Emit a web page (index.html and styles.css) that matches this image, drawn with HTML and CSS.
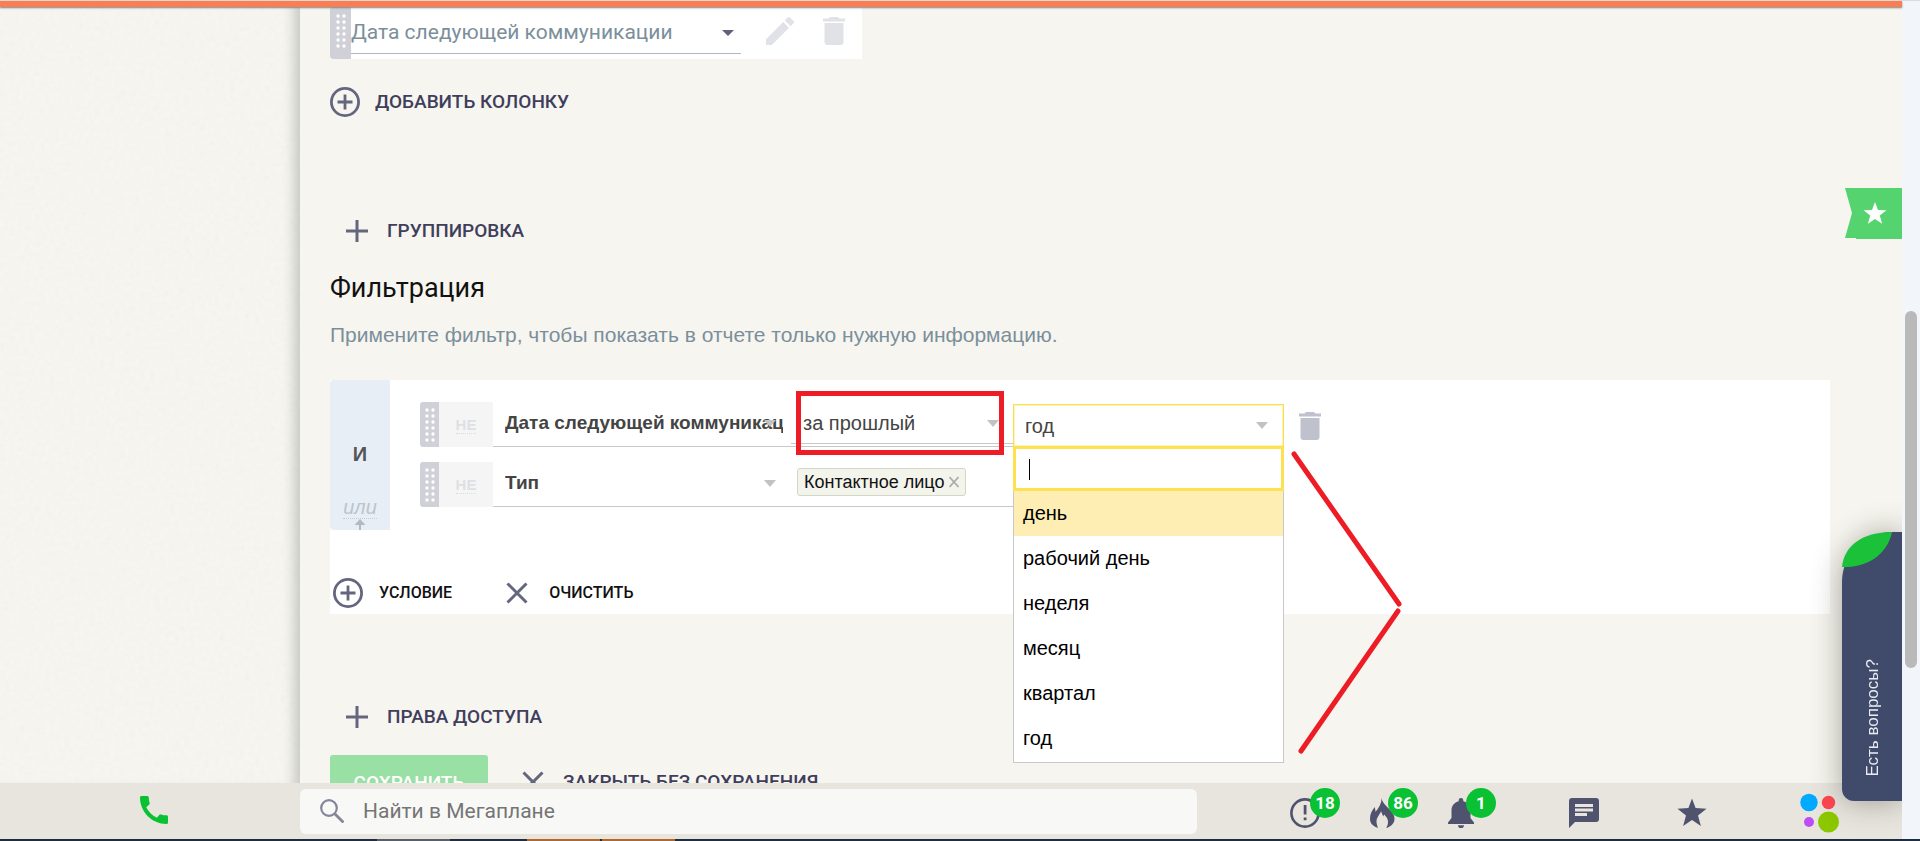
FILE: index.html
```html
<!DOCTYPE html>
<html lang="ru">
<head>
<meta charset="utf-8">
<title>Мегаплан — отчет</title>
<link rel="stylesheet" href="styles.css">
</head>
<body>
<svg class="defs" aria-hidden="true">
  <symbol id="i-dots" viewBox="0 0 12 36"><g fill="#fff"><circle cx="2" cy="3" r="1.7"/><circle cx="8" cy="3" r="1.7"/><circle cx="2" cy="9" r="1.7"/><circle cx="8" cy="9" r="1.7"/><circle cx="2" cy="15" r="1.7"/><circle cx="8" cy="15" r="1.7"/><circle cx="2" cy="21" r="1.7"/><circle cx="8" cy="21" r="1.7"/><circle cx="2" cy="27" r="1.7"/><circle cx="8" cy="27" r="1.7"/><circle cx="2" cy="33" r="1.7"/><circle cx="8" cy="33" r="1.7"/></g></symbol>
  <symbol id="i-trash" viewBox="0 0 22 28"><path d="M7 0h8l1.500 1.500H22V4.500H0V1.500H5.500zM1.500 6h19v19a3 3 0 0 1-3 3h-13a3 3 0 0 1-3-3z"/></symbol>
  <symbol id="i-pencil" viewBox="3 3 18 18"><path d="M3 17.250V21h3.750L17.810 9.940l-3.750-3.750zM20.710 7.040a1 1 0 0 0 0-1.410l-2.340-2.340a1 1 0 0 0-1.410 0l-1.830 1.830 3.750 3.750z"/></symbol>
  <symbol id="i-add" viewBox="0 0 30 30"><g fill="none" stroke="#64667f" stroke-width="2.800"><circle cx="15" cy="15" r="13.600"/><path d="M15 7.500v15M7.500 15h15"/></g></symbol>
  <symbol id="i-plus" viewBox="0 0 22 22"><path d="M11 0v22M0 11h22" fill="none" stroke="#64667f" stroke-width="3"/></symbol>
  <symbol id="i-close" viewBox="0 0 22 22"><path d="M1.500 1.500l19 19M20.500 1.500l-19 19" fill="none" stroke="#64667f" stroke-width="3"/></symbol>
</svg>

<div class="app">
  <div class="window">
    <div class="topline"></div>
    <div class="workspace">
      <aside class="sidebar">
        <svg class="grain" aria-hidden="true"><filter id="grain"><feTurbulence type="fractalNoise" baseFrequency="0.2" numOctaves="3"/><feColorMatrix type="saturate" values="0"/></filter><rect width="100%" height="100%" filter="url(#grain)"/></svg>
      </aside>
      <main class="content">
        <div class="column-row">
          <span class="handle handle-column"><svg class="dots"><use href="#i-dots"/></svg></span>
          <label class="select column-select"><select aria-label="Колонка"><option>Дата следующей коммуникации</option></select></label>
          <button class="icon-btn" aria-label="Изменить"><svg class="pencil"><use href="#i-pencil"/></svg></button>
          <button class="icon-btn" aria-label="Удалить"><svg class="trash"><use href="#i-trash"/></svg></button>
        </div>
        <button class="text-btn add-column"><svg class="ic30"><use href="#i-add"/></svg>Добавить колонку</button>
        <button class="text-btn section-btn grouping"><svg class="ic22"><use href="#i-plus"/></svg>Группировка</button>
        <h2 class="title">Фильтрация</h2>
        <p class="hint">Примените фильтр, чтобы показать в отчете только нужную информацию.</p>

        <section class="filter">
          <div class="logic">
            <strong class="logic-and">И</strong>
            <a href="#" class="logic-or">или</a>
            <svg class="logic-arrow" viewBox="0 0 12 11"><path d="M6 0l5.500 6H7v5H5V6H.5z" fill="#b5b9bd"/></svg>
          </div>
          <div class="filter-body">
            <div class="condition">
              <span class="handle"><svg class="dots"><use href="#i-dots"/></svg></span>
              <button class="not"><span>НЕ</span></button>
              <label class="select field"><select aria-label="Поле"><option>Дата следующей коммуникации</option></select></label>
              <label class="select period"><select aria-label="Период"><option>за прошлый</option></select><span class="marker"></span></label>
              <div class="unit">
                <label class="select unit-select"><select aria-label="Единица"><option>год</option></select></label>
                <div class="menu">
                  <div class="menu-search"><input type="text" aria-label="Поиск"><span class="caret"></span></div>
                  <ul class="menu-list" role="listbox">
                    <li class="active" role="option">день</li>
                    <li role="option">рабочий день</li>
                    <li role="option">неделя</li>
                    <li role="option">месяц</li>
                    <li role="option">квартал</li>
                    <li role="option">год</li>
                  </ul>
                </div>
                <svg class="pointer" viewBox="0 0 120 310" aria-hidden="true"><path d="M10 8l105 150M114 165L17 305" fill="none" stroke="#ee1c24" stroke-width="5" stroke-linecap="round"/></svg>
              </div>
              <button class="icon-btn remove" aria-label="Удалить условие"><svg class="trash"><use href="#i-trash"/></svg></button>
            </div>
            <div class="condition">
              <span class="handle"><svg class="dots"><use href="#i-dots"/></svg></span>
              <button class="not"><span>НЕ</span></button>
              <label class="select field"><select aria-label="Поле"><option>Тип</option></select></label>
              <div class="tags"><span class="tag">Контактное лицо<button class="tag-x" aria-label="Убрать"><svg viewBox="0 0 10 12"><path d="M.5 1l9 10M9.500 1l-9 10" stroke="#aaa" stroke-width="1.600"/></svg></button></span></div>
            </div>
          </div>
          <div class="filter-actions">
            <button class="text-btn plain"><svg class="ic30"><use href="#i-add"/></svg>Условие</button>
            <button class="text-btn plain"><svg class="ic22"><use href="#i-close"/></svg>Очистить</button>
          </div>
        </section>

        <button class="text-btn section-btn access"><svg class="ic22"><use href="#i-plus"/></svg>Права доступа</button>
        <div class="form-actions">
          <button class="save">Сохранить</button>
          <button class="text-btn cancel"><svg class="ic22"><use href="#i-close"/></svg>Закрыть без сохранения</button>
        </div>
      </main>
      <button class="favorite" aria-label="Избранное"><svg viewBox="0 0 57 51"><path d="M0 0h57v51H11v-1H0l7-25z" fill="#55d36f"/><path d="M30 14l3 8 8.500.2-6.700 5.300 2.300 8.300-7.100-4.700-7.100 4.700 2.300-8.300-6.700-5.300L27 22z" fill="#fff"/></svg></button>
    </div>

    <footer class="bar">
      <button class="phone" aria-label="Телефон"><svg viewBox="3 3 18 18"><path fill="#0ac033" d="M20.010 15.380c-1.230 0-2.420-.2-3.530-.56a.98.98 0 0 0-1.010.24l-1.570 1.970c-2.830-1.350-5.480-3.900-6.890-6.830l1.950-1.660c.27-.28.350-.67.240-1.020-.37-1.110-.56-2.300-.56-3.530 0-.54-.45-.99-.99-.99H4.190C3.650 3 3 3.240 3 3.990 3 13.280 10.730 21 20.010 21c.71 0 .99-.63.99-1.180v-3.450c0-.54-.45-.99-.99-.99z"/></svg></button>
      <label class="search"><svg viewBox="0 0 24 24" class="lens"><g fill="none" stroke="#85869a" stroke-width="2.200"><circle cx="9" cy="9" r="7.800"/><path d="M14.500 14.500l9 9" stroke-width="2.800"/></g></svg><input type="search" placeholder="Найти в Мегаплане"></label>
      <nav class="tools">
        <a href="#" class="tool" aria-label="Задачи"><svg viewBox="0 0 30 30"><circle cx="15" cy="15" r="13.600" fill="none" stroke="#50536e" stroke-width="2.600"/><path d="M13.700 7h2.800v9.500h-2.800zM13.700 19.500h2.800v2.800h-2.800z" fill="#50536e"/></svg><span class="badge">18</span></a>
        <a href="#" class="tool" aria-label="Горящие"><svg viewBox="0 0 30 30"><path fill="#50536e" d="M13.500 0c.6 4.200 3.600 6.600 6.500 9.800 3.700 4 6.500 6.600 6.500 11.200 0 4.200-3.400 7.600-8.300 9 2.300-3.500 2.500-7.200.5-10.500l-2.500-3-1 2-2.200-5.300c-1 3.200-4.500 6-4.500 10.200 0 2.500.9 4.800 1.600 6.600C5.100 28.300 2 25.500 2 21c0-4.800 1.700-8.600 4.800-12l.8 4.700C10.900 9.500 13.500 6 13.500 0z"/></svg><span class="badge">86</span></a>
        <a href="#" class="tool" aria-label="Уведомления"><svg viewBox="0 0 30 30"><path fill="#50536e" d="M15 0a2.300 2.300 0 0 0-2.300 2.300v1C8.300 4.300 5.500 8 5.500 12.500V20L2 24.500V26h26v-1.500L24.500 20v-7.500c0-4.500-2.800-8.200-7.200-9.200v-1A2.300 2.300 0 0 0 15 0zM12 27.200h6a3 3 0 0 1-6 0z"/></svg><span class="badge">1</span></a>
        <a href="#" class="tool tool-chat" aria-label="Сообщения"><svg viewBox="0 0 30 30"><path fill="#50536e" fill-rule="evenodd" d="M3 0h24a3 3 0 0 1 3 3v18a3 3 0 0 1-3 3H6l-6 6V3a3 3 0 0 1 3-3zM6 6v3h18V6zM6 10.500v3h18v-3zM6 15v3h12v-3z"/></svg></a>
        <a href="#" class="tool tool-star" aria-label="Избранное"><svg viewBox="0 0 30 30"><path fill="#50536e" d="M15 .5l3.600 9.600 10.900.6-8.500 6.700 2.900 10.600L15 22l-8.900 6 2.900-10.600L.5 10.700l10.900-.6z"/></svg></a>
        <a href="#" class="tool tool-logo" aria-label="Мегаплан"><svg viewBox="0 0 40 40"><circle cx="9" cy="9.500" r="8.700" fill="#00aaff"/><circle cx="28.500" cy="9.500" r="6.700" fill="#ff4650"/><circle cx="9" cy="29" r="5" fill="#bb4df5"/><circle cx="28.500" cy="29" r="10.500" fill="#8cc800"/></svg></a>
      </nav>
    </footer>
    <button class="help"><svg class="leaf" viewBox="0 0 50 35"><path d="M0 35C2 14 20 0 50 0 46 20 28 36 0 35z" fill="#1bc138"/></svg><span>Есть вопросы?</span></button>
  </div>
  <div class="scroll"><span class="thumb"></span></div>
  <div class="taskbar"><i class="task-grey"></i><i class="task-orange"></i><i class="task-orange"></i></div>
</div>
</body>
</html>
```
FILE: styles.css
```css
* { box-sizing: border-box; }
body { margin: 0; font-family: "Liberation Sans", Arial, sans-serif; font-size: 18px; color: #111; background: #f6f5ef; }
button, input, select { font: inherit; color: inherit; border: 0; padding: 0; background: none; border-radius: 0; }
button { cursor: pointer; }
svg { display: block; }
.defs { position: absolute; width: 0; height: 0; }

.app { display: grid; grid-template-columns: 1fr 18px; grid-template-rows: 1fr 2px; height: 100vh; overflow: hidden; border-top: 1px solid #d9dddd; }
.window { position: relative; display: flex; flex-direction: column; min-width: 0; min-height: 0; }
.topline { flex: none; height: 6px; background: #ff7b50; box-shadow: 0 1px 2px #6d8a90; position: relative; z-index: 2; }
.workspace { flex: 1; min-height: 0; display: flex; position: relative; overflow: hidden; }
.sidebar { flex: none; width: 300px; background: #f7f6f1; position: relative; box-shadow: inset -14px 0 12px -8px #c9cac5; }
.grain { width: 100%; height: 100%; opacity: .06; }
.content { flex: 1; min-width: 0; padding: 0 72px 0 30px; display: flex; flex-direction: column; align-items: flex-start; }
.content > * { flex-shrink: 0; }

.handle { flex: none; width: 19px; display: flex; align-items: center; justify-content: center; background: #d0d1d8; border-radius: 3px 0 0 3px; }
.dots { width: 12px; height: 36px; margin-left: 2px; }
.select { position: relative; display: block; }
.select select { appearance: none; width: 100%; height: 100%; outline: 0; }
.select::after { content: ""; position: absolute; right: 15px; top: 50%; margin-top: -4px; border: 6px solid transparent; border-top: 7px solid #c2c2c2; border-bottom: 0; pointer-events: none; }
.icon-btn { display: flex; align-items: center; }
.trash { width: 22px; height: 28px; fill: currentColor; }
.pencil { width: 28px; height: 28px; fill: currentColor; }

.column-row { display: flex; width: 532px; height: 52px; background: #fff; font: 21px Roboto, sans-serif; color: #7b8f9b; }
.handle-column { width: 21px; }
.handle-column .dots { margin-bottom: 4px; }
.column-select { width: 390px; height: 47px; border-bottom: 1px solid #b5b8b8; }
.column-select select { padding-top: 3px; }
.column-select::after { right: 7px; border-top-color: #5f617b; border-top-width: 6px; margin-top: 0; }
.column-row .icon-btn { color: #e1e2e7; margin-left: 25px; padding-bottom: 4px; }
.column-row .icon-btn + .icon-btn { margin-left: 29px; }

.text-btn { display: flex; align-items: center; gap: 15px; font: 500 19px/30px Roboto, sans-serif; color: #3f3e5c; text-transform: uppercase; white-space: nowrap; }
.ic30 { width: 30px; height: 30px; }
.ic22 { width: 22px; height: 22px; }
.add-column { margin-top: 28px; }
.section-btn { margin-left: 16px; gap: 19px; }
.grouping { margin-top: 99px; }
.title { margin: 26px 0 0; font: 27px/32px Roboto, sans-serif; }
.hint { margin: 17px 0 0; font-size: 21px; line-height: 28px; color: #7b8f9b; }

.filter { align-self: stretch; display: grid; grid-template-columns: 60px 1fr; margin-top: 31px; min-height: 234px; background: #fff; grid-template-rows: 150px 1fr; }
.logic { background: #e7eef5; border-radius: 4px 0 0 4px; display: flex; flex-direction: column; align-items: center; color: #555; font-size: 20px; }
.logic-and { margin-top: 62px; line-height: 24px; }
.logic-or { margin-top: 31px; font: italic 20px/21px "Liberation Sans", Arial, sans-serif; color: #bcc4ce; text-decoration: none; border-bottom: 1px dotted #ccc; }
.logic-arrow { width: 12px; height: 11px; }
.filter-body { padding: 22px 0 0 30px; display: flex; flex-direction: column; gap: 15px; color: #444; }
.condition { display: flex; height: 45px; }
.not { width: 54px; background: #f5f5f6; color: #dfe0e5; font: bold 15px/18px "Liberation Sans", Arial, sans-serif; }
.not span { border-bottom: 1px dotted #dcdcd4; }
.field { width: 298px; border-bottom: 1px solid #c8c8c8; font-weight: bold; font-size: 19px; }
.field select { padding: 0 8px 3px 12px; }
.period { width: 222px; border-bottom: 1px solid #c8c8c8; font-size: 20px; }
.period select { padding: 0 0 0 12px; height: 42px; border-bottom: 1px solid #c8c8c8; }
.period::after { right: 14px; }
.marker { position: absolute; inset: -11px 9px -9px 5px; border: 5px solid #ee1c24; }
.unit { position: relative; width: 271px; font-size: 20px; }
.unit-select { height: 43px; margin-top: 2px; border: 1px solid #fde04f; box-shadow: inset 0 0 0 1px #fff3b5; }
.unit-select select { padding-left: 11px; }
.menu { position: absolute; top: 44px; left: 0; right: 0; background: #fff; color: #000; border: 1px solid #c8c8c8; z-index: 3; }
.menu-search { position: relative; margin: -1px -1px 0; height: 45px; border: 3px solid #fee150; }
.menu-search input { width: 100%; height: 100%; padding-left: 12px; outline: 0; }
.caret { position: absolute; left: 13px; top: 10px; width: 1px; height: 21px; background: #000; }
.menu-list { list-style: none; margin: 0; padding: 0 0 1px; }
.menu-list li { height: 45px; line-height: 45px; padding-left: 9px; }
.menu-list .active { background: #ffeeb4; }
.pointer { position: absolute; left: 271px; top: 44px; width: 120px; height: 310px; z-index: 4; pointer-events: none; }
.remove { color: #bfc2cc; margin-left: 15px; padding-top: 3px; }
.tags { width: 222px; padding: 6px 0 0 6px; border-bottom: 1px solid #c8c8c8; }
.tag { display: inline-flex; align-items: center; height: 28px; padding: 0 6px; gap: 5px; background: #f3f4ec; border: 1px solid #d4d7c4; border-radius: 3px; font-size: 18px; color: #111; white-space: nowrap; }
.tag-x svg { width: 10px; height: 12px; }
.filter-actions { grid-column: 1 / -1; display: flex; gap: 54px; padding: 48px 0 0 3px; align-items: flex-start; }
.plain { font-size: 16px; color: #111; gap: 16px; }
.plain + .plain { gap: 21px; }

.access { margin-top: 88px; }
.form-actions { display: flex; margin-top: 23px; gap: 34px; }
.save { width: 158px; height: 54px; background: #99e0a5; color: #fff; border-radius: 3px; font: 500 19px Roboto, sans-serif; text-transform: uppercase; }
.cancel { gap: 19px; }

.favorite { position: absolute; right: 0; top: 181px; width: 57px; height: 51px; }
.help { position: absolute; right: 0; bottom: 38px; width: 60px; height: 269px; background: #404b6c; border-radius: 50px 0 0 12px; color: #e9ebf0; box-shadow: 0 0 30px rgba(60, 60, 50, .45); display: flex; justify-content: center; z-index: 3; clip-path: inset(-40px 0 -40px -40px); padding: 0 0 24px 2px; align-items: flex-end; font-size: 17px; }
.help span { writing-mode: vertical-rl; transform: rotate(180deg); line-height: 20px; white-space: nowrap; }
.leaf { position: absolute; left: 0; top: 0; width: 50px; height: 35px; }

.bar { flex: none; height: 56px; background: #e8e5de; display: flex; align-items: center; }
.phone { flex: none; width: 28px; height: 28px; margin: 0 132px 3px 140px; }
.search { flex: 0 1 897px; display: flex; align-items: center; gap: 19px; height: 45px; padding-left: 20px; background: #f8f9f6; border-radius: 6px; }
.lens { width: 24px; height: 24px; }
.search input { flex: 1; outline: 0; appearance: none; font: 21px Roboto, sans-serif; }
.search input::placeholder { color: #757575; opacity: 1; }
.tools { flex: 1; display: flex; align-items: center; padding-left: 93px; }
.tool { position: relative; width: 30px; height: 30px; margin: 4px 48px 0 0; }
.tool:nth-child(3) { margin-right: 93px; }
.tool-chat { margin-right: 78px; }
.tool-star { margin-right: 93px; }
.tool-logo { width: 40px; height: 40px; margin-right: 0; }
.badge { position: absolute; left: 20px; top: -10px; width: 30px; height: 30px; border-radius: 50%; background: #0ac033; color: #fff; font: bold 17px/30px Roboto, sans-serif; text-align: center; }

.scroll { background: #f2f6fa; padding: 310px 3px 0; }
.thumb { display: block; width: 12px; height: 357px; border-radius: 6px; background: #b9b9b9; }
.taskbar { grid-column: 1 / -1; background: #1f2d42; display: flex; gap: 2px; padding-left: 377px; }
.task-grey { width: 73px; background: #56606d; margin-right: 75px; }
.task-orange { width: 73px; background: #b0682f; }
```
